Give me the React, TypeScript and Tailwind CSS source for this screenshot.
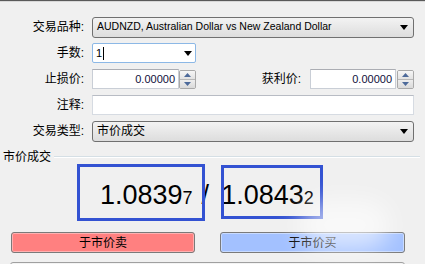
import React from 'react';

const cjk = "font-['Liberation_Sans','Noto_Sans_CJK_SC',sans-serif]";

function Arrow() {
  return (
    <svg width="8" height="5" viewBox="0 0 8 5" className="shrink-0">
      <path d="M0 0 H8 L4 5 Z" fill="#000" />
    </svg>
  );
}

function Spinner() {
  return (
    <div className="flex flex-col w-[17px] h-full border border-[#a9a9a9] rounded-[2px] overflow-hidden">
      <div className="flex-1 flex items-center justify-center bg-gradient-to-b from-[#f6f6f6] to-[#e2e2e2] border-b border-[#b8b8b8]">
        <svg width="7" height="4" viewBox="0 0 7 4"><path d="M0 4 L3.5 0 L7 4 Z" fill="#4d6a9a" /></svg>
      </div>
      <div className="flex-1 flex items-center justify-center bg-gradient-to-b from-[#eeeeee] to-[#dadada]">
        <svg width="7" height="4" viewBox="0 0 7 4"><path d="M0 0 L7 0 L3.5 4 Z" fill="#4d6a9a" /></svg>
      </div>
    </div>
  );
}

function Label({ text, className = '' }: { text: string; className?: string }) {
  return <div className={`text-[12px] text-black text-right leading-none ${className}`}>{text}</div>;
}

export default function App() {
  return (
    <div className={`relative w-[425px] h-[264px] overflow-hidden bg-[#f0f0f0] ${cjk}`}>
      <div className="h-px bg-[#5a5a5a]" />
      <div className="h-px bg-[#d8d8d8]" />

      <div className="flex flex-col gap-[6px] mt-[15px] pr-[11px]">
        <div className="flex items-center h-[20px]">
          <Label text="交易品种:" className="w-[84px]" />
          <div className="ml-[8px] flex-1 h-[21px] flex items-center justify-between pl-[4px] pr-[5px] rounded-[3px] border border-[#707070] bg-gradient-to-b from-[#f3f3f3] to-[#dddddd]">
            <span className="text-[10.5px] text-black">AUDNZD, Australian Dollar vs New Zealand Dollar</span>
            <Arrow />
          </div>
        </div>

        <div className="flex items-center h-[20px]">
          <Label text="手数:" className="w-[84px]" />
          <div className="ml-[8px] w-[104px] h-[20px] flex items-center justify-between pl-[3px] pr-[3px] bg-white border border-[#8cb8e6] rounded-[2px]">
            <span className="flex items-center text-[11px] text-black">1<span className="inline-block w-px h-[13px] bg-black ml-[1px]" /></span>
            <Arrow />
          </div>
        </div>

        <div className="flex items-center h-[20px]">
          <Label text="止损价:" className="w-[84px]" />
          <div className="ml-[8px] w-[87px] h-[20px] flex items-center justify-end pr-[3px] bg-white border border-[#c9ced6] border-t-[#abadb3]">
            <span className="text-[11px] text-[#10103a]">0.00000</span>
          </div>
          <div className="h-[19px]"><Spinner /></div>
          <Label text="获利价:" className="ml-auto" />
          <div className="ml-[9px] w-[86px] h-[20px] flex items-center justify-end pr-[3px] bg-white border border-[#c9ced6] border-t-[#abadb3]">
            <span className="text-[11px] text-[#10103a]">0.00000</span>
          </div>
          <div className="h-[19px] ml-px"><Spinner /></div>
        </div>

        <div className="flex items-center h-[20px]">
          <Label text="注释:" className="w-[84px]" />
          <div className="ml-[8px] flex-1 h-[20px] bg-white border border-[#d6dbe2] border-t-[#b8bcc4]" />
        </div>

        <div className="flex items-center h-[20px]">
          <Label text="交易类型:" className="w-[84px]" />
          <div className="ml-[8px] flex-1 h-[21px] flex items-center justify-between pl-[4px] pr-[5px] rounded-[3px] border border-[#707070] bg-gradient-to-b from-[#f3f3f3] to-[#dddddd]">
            <span className="text-[12px] text-black">市价成交</span>
            <Arrow />
          </div>
        </div>
      </div>

      <div className="flex items-center mt-[8px] h-[16px] pr-[5px]">
        <span className="pl-[3px] text-[12px] text-black leading-none">市价成交</span>
        <div className="flex-1 ml-[3px] h-[2px] border-t border-[#d5dfe5] border-b border-b-white" />
      </div>

      <div className="relative h-[57px] flex items-end pb-[10px] pl-[100px] text-black font-['Liberation_Sans',sans-serif]">
        <div className="flex items-baseline leading-[27px]">
          <span className="text-[27px]">1.0839</span>
          <span className="text-[18px]">7</span>
          <span className="text-[27px] ml-[9px] mr-[12px]">/</span>
          <span className="text-[27px]">1.0843</span>
          <span className="text-[18px]">2</span>
        </div>
        <div className="absolute left-[77px] top-[-1px] w-[128px] h-[57px] border-[3px] border-[#3352d2]" />
        <div className="absolute left-[221px] top-0 w-[102px] h-[54px] border-[3px] border-[#3352d2]" />
      </div>

      <div className="flex mt-[10px] pl-[11px] gap-[25px]">
        <button className="w-[184px] h-[21px] rounded-[3px] border border-[#7a7a7a] bg-[#ff8080] shadow-[inset_0_0_0_1px_#ffb0b0] text-[12px] text-black leading-none">
          于市价卖
        </button>
        <button className="w-[185px] h-[21px] rounded-[3px] border border-[#7a7a7a] bg-[#a3c1ff] shadow-[inset_0_0_0_1px_#c8dbff] text-[12px] text-black leading-none">
          于市价买
        </button>
      </div>

      <div className="mt-[9px] ml-[10px] w-[395px] h-[21px] rounded-[3px] border border-[#a0a0a0] bg-gradient-to-b from-[#f4f4f4] to-[#e4e4e4]" />

      <div className="absolute left-[300px] top-[200px] w-[90px] h-[50px] rounded-full bg-white/60 blur-md pointer-events-none" />
    </div>
  );
}
